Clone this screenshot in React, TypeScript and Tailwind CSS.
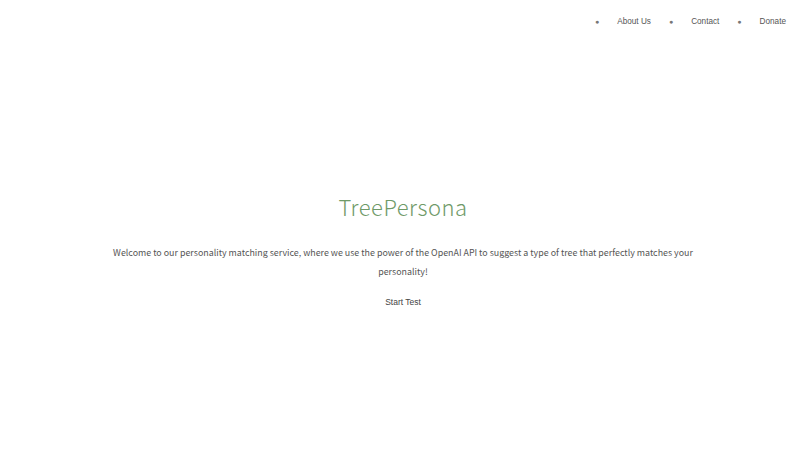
import React from 'react'

const NAV = ['About Us', 'Contact', 'Donate']

export default function App() {
  return (
    <div className="min-h-screen bg-white font-['Liberation_Sans',Arial,sans-serif]">
      {/* Header nav */}
      <header className="flex justify-end pr-[20px] pt-[16px]">
        <ul className="flex items-center gap-[18px]">
          {NAV.map((item) => (
            <li key={item} className="flex items-center gap-[18px] text-[#555]">
              <span className="text-[7px] text-[#777]">●</span>
              <span className="text-[8.2px] leading-[12px]">{item}</span>
            </li>
          ))}
        </ul>
      </header>

      {/* Hero */}
      <main className="flex flex-col items-center pt-[163px] text-center">
        <h1 className="font-['Noto_Sans_CJK_JP','Noto_Sans',sans-serif] text-[22px] font-light leading-[30px] tracking-[0.5px] text-[#6f9a68]">
          TreePersona
        </h1>
        <p className="mt-[22px] w-[604px] font-['Noto_Sans_CJK_JP','Noto_Sans',sans-serif] text-[8.9px] leading-[19px] text-[#555]">
          Welcome to our personality matching service, where we use the power of the OpenAI API to suggest a type of tree that perfectly matches your personality!
        </p>
        <button className="mt-[15px] text-[8.5px] text-[#444]">Start Test</button>
      </main>
    </div>
  )
}
